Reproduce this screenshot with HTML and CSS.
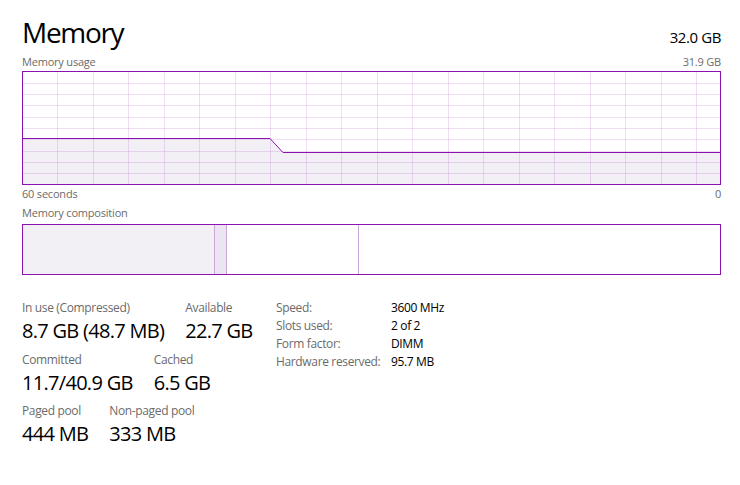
FILE: index.html
```html
<!DOCTYPE html>
<html lang="en">
<head>
  <meta charset="UTF-8">
  <meta name="viewport" content="width=device-width, initial-scale=1.0">
  <title>Memory</title>
  <link rel="stylesheet" href="styles.css">
</head>
<body>
  <div class="page">
    <header class="head">
      <h1 class="title">Memory</h1>
      <span class="total">32.0 GB</span>
    </header>

    <div class="caption">
      <span>Memory usage</span>
      <span>31.9 GB</span>
    </div>
    <svg class="usage" width="699" height="114" viewBox="0 0 699 114">
      <polygon class="usage-fill" points="1,67.5 248,67.5 261,81.5 698,81.5 698,113 1,113"/>
      <g class="grid">
        <path d="M35.5 1V113M71.5 1V113M106.5 1V113M142.5 1V113M177.5 1V113M213.5 1V113M248.5 1V113M284.5 1V113M319.5 1V113M355.5 1V113M390.5 1V113M426.5 1V113M461.5 1V113M497.5 1V113M532.5 1V113M568.5 1V113M603.5 1V113M639.5 1V113M674.5 1V113"/>
        <path d="M1 12.5H698M1 23.5H698M1 34.5H698M1 46.5H698M1 57.5H698M1 68.5H698M1 80.5H698M1 91.5H698M1 102.5H698"/>
      </g>
      <polyline class="usage-line" points="1,67.5 248,67.5 261,81.5 698,81.5"/>
      <rect class="frame" x="0.5" y="0.5" width="698" height="113"/>
    </svg>
    <div class="caption axis">
      <span>60 seconds</span>
      <span>0</span>
    </div>

    <div class="caption comp-label">
      <span>Memory composition</span>
    </div>
    <div class="comp">
      <div class="seg in-use" style="width: 192px"></div>
      <div class="seg modified" style="width: 12px"></div>
      <div class="seg standby" style="width: 132px"></div>
      <div class="seg free"></div>
    </div>

    <section class="stats">
      <div class="stat-block">
        <div class="stat-row">
          <div class="stat">
            <div class="stat-label">In use (Compressed)</div>
            <div class="stat-value">8.7 GB (48.7 MB)</div>
          </div>
          <div class="stat">
            <div class="stat-label">Available</div>
            <div class="stat-value">22.7 GB</div>
          </div>
        </div>
        <div class="stat-row">
          <div class="stat">
            <div class="stat-label">Committed</div>
            <div class="stat-value">11.7/40.9 GB</div>
          </div>
          <div class="stat">
            <div class="stat-label">Cached</div>
            <div class="stat-value">6.5 GB</div>
          </div>
        </div>
        <div class="stat-row">
          <div class="stat">
            <div class="stat-label">Paged pool</div>
            <div class="stat-value">444 MB</div>
          </div>
          <div class="stat">
            <div class="stat-label">Non-paged pool</div>
            <div class="stat-value">333 MB</div>
          </div>
        </div>
      </div>

      <dl class="details">
        <dt>Speed:</dt><dd>3600 MHz</dd>
        <dt>Slots used:</dt><dd>2 of 2</dd>
        <dt>Form factor:</dt><dd>DIMM</dd>
        <dt>Hardware reserved:</dt><dd>95.7 MB</dd>
      </dl>
    </section>
  </div>
</body>
</html>
```

FILE: styles.css
```css
:root {
  --purple: #8b12ae;
  --grid: rgba(139, 18, 174, 0.14);
  --fill: #f3f0f5;
  --divider: #cda6d8;
  --label: #6b6b6b;
  --text: #000000;
}

html, body {
  margin: 0;
  height: 485px;
  overflow: hidden;
  background: #ffffff;
}

body {
  font-family: 'Open Sans', 'Noto Sans', sans-serif;
  color: var(--text);
}

.page {
  padding: 15px 19px 0 22px;
}

.head {
  display: flex;
  justify-content: space-between;
  align-items: baseline;
}

.title {
  margin: 0;
  font-size: 28px;
  font-weight: 400;
  line-height: 34px;
  letter-spacing: -1.3px;
}

.total {
  font-size: 15px;
  letter-spacing: -0.4px;
}

.caption {
  display: flex;
  justify-content: space-between;
  font-size: 11px;
  line-height: 15px;
  color: var(--label);
  margin-top: 5px;
  letter-spacing: -0.2px;
}

.usage {
  display: block;
  margin-top: 2px;
}

.usage-fill {
  fill: var(--fill);
}

.grid path {
  fill: none;
  stroke: var(--grid);
  stroke-width: 1;
}

.usage-line {
  fill: none;
  stroke: var(--purple);
  stroke-width: 1;
}

.frame {
  fill: none;
  stroke: var(--purple);
  stroke-width: 1;
}

.caption.axis {
  margin-top: 1px;
}

.caption.comp-label {
  margin-top: 4px;
}

.comp {
  display: flex;
  height: 51px;
  margin-top: 4px;
  border: 1px solid var(--purple);
  box-sizing: border-box;
}

.seg {
  box-sizing: border-box;
  height: 100%;
  border-right: 1px solid var(--divider);
}

.in-use { background: var(--fill); }
.modified { background: #ede4f1; }
.standby { background: #ffffff; }

.free {
  flex: 1;
  border-right: none;
}

/* Stats */
.stats {
  display: flex;
  align-items: flex-start;
  gap: 21px;
  margin-top: 25px;
}

.stat-block {
  width: 233px;
}

.stat-row {
  display: flex;
  gap: 21px;
  margin-bottom: 7.5px;
}

.stat-label {
  font-size: 12px;
  line-height: 16px;
  color: var(--label);
  letter-spacing: -0.35px;
}

.stat-value {
  font-size: 20px;
  line-height: 26px;
  margin-top: 2px;
  white-space: nowrap;
  letter-spacing: -0.7px;
}

.details {
  display: grid;
  grid-template-columns: 115px auto;
  margin: -1px 0 0;
  font-size: 12px;
  line-height: 18px;
  letter-spacing: -0.35px;
}

.details dt {
  color: var(--label);
}

.details dd {
  margin: 0;
}
```
